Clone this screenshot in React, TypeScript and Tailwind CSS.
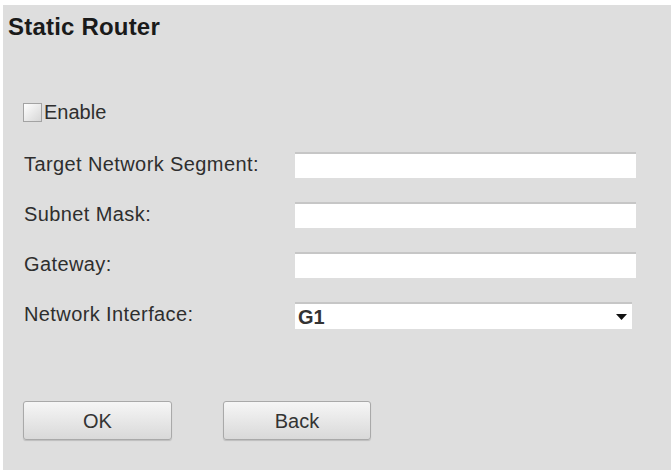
import { useState } from 'react';

const fields = ['Target Network Segment:', 'Subnet Mask:', 'Gateway:'];

export default function App() {
  const [enabled, setEnabled] = useState(false);

  return (
    <div
      className="w-[671px] h-[470px] bg-white pt-[5px] pl-[3px] flex"
      style={{ fontFamily: '"Liberation Sans", Arial, sans-serif' }}
    >
      <div className="flex-1 bg-[#dedede] flex flex-col">
        {/* Title */}
        <h1 className="pt-[8px] pl-[5px] text-[24px] leading-[28px] font-bold tracking-[0.2px] text-[#1a1a1a]">
          Static Router
        </h1>

        {/* Enable */}
        <label className="mt-[59px] ml-[20px] flex items-center h-[24px] cursor-pointer">
          <span
            onClick={() => setEnabled(!enabled)}
            className="w-[19px] h-[19px] border border-[#a3a3a3] bg-gradient-to-br from-white to-[#d6d6d6] flex items-center justify-center text-[13px] text-[#333]"
          >
            {enabled ? '✓' : ''}
          </span>
          <span className="text-[20px] leading-[24px] text-[#2e2e2e] ml-[2px]">Enable</span>
        </label>

        {/* Fields */}
        <div className="mt-[28px] ml-[21px] flex flex-col gap-[24px]">
          {fields.map((f) => (
            <div key={f} className="flex items-center h-[26px]">
              <span className="w-[271px] -mt-[3px] text-[20px] leading-[24px] tracking-[0.4px] text-[#2e2e2e]">{f}</span>
              <input
                type="text"
                className="w-[341px] h-[26px] bg-white border-t-2 border-[#c6c6c6] outline-none px-1 text-[18px]"
              />
            </div>
          ))}
          <div className="flex items-center h-[27px]">
            <span className="w-[271px] -mt-[3px] text-[20px] leading-[24px] tracking-[0.4px] text-[#2e2e2e]">Network Interface:</span>
            <div className="w-[337px] h-[27px] bg-white border-t-2 border-[#c6c6c6] flex items-center justify-between pl-[3px] pr-[5px]">
              <span className="text-[20px] leading-[24px] font-bold text-[#333]">G1</span>
              <svg width="11" height="6" viewBox="0 0 11 6">
                <path d="M0 0 L11 0 L5.5 6 Z" fill="#111" />
              </svg>
            </div>
          </div>
        </div>

        {/* Buttons */}
        <div className="mt-[72px] ml-[20px] flex gap-[51px]">
          <button className="w-[149px] h-[39px] rounded-[3px] border border-[#a9a9a9] bg-gradient-to-b from-[#f6f6f6] to-[#d9d9d9] text-[20px] text-[#333] shadow-[0_1px_1px_rgba(0,0,0,0.15)]">
            OK
          </button>
          <button className="w-[148px] h-[39px] rounded-[3px] border border-[#a9a9a9] bg-gradient-to-b from-[#f6f6f6] to-[#d9d9d9] text-[20px] text-[#333] shadow-[0_1px_1px_rgba(0,0,0,0.15)]">
            Back
          </button>
        </div>
      </div>
    </div>
  );
}
